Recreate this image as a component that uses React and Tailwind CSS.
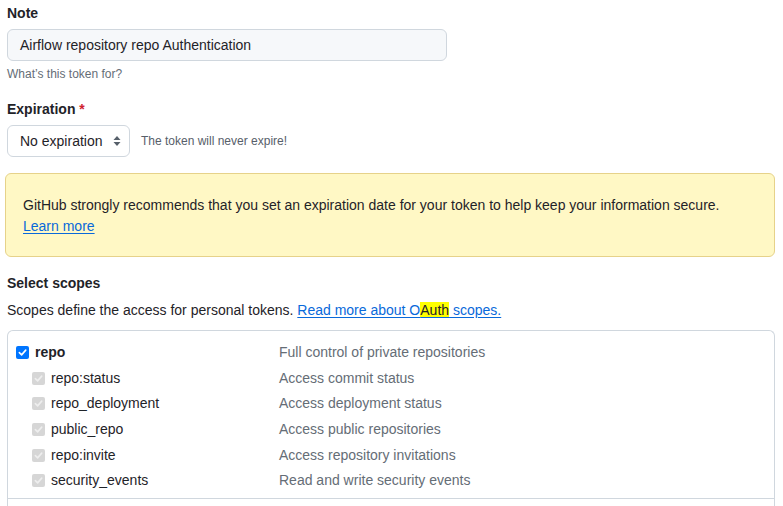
import React from 'react';

const scopes = [
  { name: 'repo:status', desc: 'Access commit status' },
  { name: 'repo_deployment', desc: 'Access deployment status' },
  { name: 'public_repo', desc: 'Access public repositories' },
  { name: 'repo:invite', desc: 'Access repository invitations' },
  { name: 'security_events', desc: 'Read and write security events' },
];

function CheckBox({ disabled }) {
  if (disabled) {
    return (
      <span className="flex h-[13px] w-[13px] items-center justify-center rounded-[2px] bg-[#d6d6d6]">
        <svg width="9" height="9" viewBox="0 0 10 10" fill="none">
          <path d="M1.5 5.2 4 7.6 8.6 2.4" stroke="#eeeeee" strokeWidth="1.8" strokeLinecap="round" strokeLinejoin="round" />
        </svg>
      </span>
    );
  }
  return (
    <span className="flex h-[13px] w-[13px] items-center justify-center rounded-[2px] bg-[#0075ff]">
      <svg width="9" height="9" viewBox="0 0 10 10" fill="none">
        <path d="M1.5 5.2 4 7.6 8.6 2.4" stroke="#ffffff" strokeWidth="1.8" strokeLinecap="round" strokeLinejoin="round" />
      </svg>
    </span>
  );
}

export default function App() {
  return (
    <div className="min-h-[506px] bg-white font-['Liberation_Sans',sans-serif] text-[14px] text-[#1f2328]">
      <div className="pl-[7px] pr-[9px] pt-[3px]">
        {/* Note */}
        <label className="block text-[14px] font-semibold leading-[20px]">Note</label>
        <div className="mt-[6px] flex h-[32px] w-[440px] items-center rounded-[6px] border border-[#d0d7de] bg-[#f6f8fa] px-[12px] leading-[20px]">
          Airflow repository repo Authentication
        </div>
        <p className="mt-[4px] text-[12px] leading-[18px] text-[#656d76]">What’s this token for?</p>

        {/* Expiration */}
        <label className="mt-[16px] block text-[14px] font-semibold leading-[20px]">
          Expiration <span className="text-[#cf222e]">*</span>
        </label>
        <div className="mt-[6px] flex items-center gap-[11px]">
          <div className="flex h-[32px] w-[123px] items-center justify-between rounded-[6px] border border-[#d0d7de] bg-white pl-[12px] pr-[8px]">
            <span>No expiration</span>
            <svg width="8" height="12" viewBox="0 0 8 12" fill="#57606a">
              <path d="M4 1 7.5 5H.5z" />
              <path d="M4 11 .5 7h7z" />
            </svg>
          </div>
          <span className="text-[12px] text-[#57606a]">The token will never expire!</span>
        </div>
      </div>

      {/* Warning */}
      <div className="ml-[5px] mr-[8px] mt-[16px] rounded-[6px] border border-[#e6d28a] bg-[#fff8c5] px-[17px] pb-[19px] pt-[21px] leading-[21px]">
        <p>GitHub strongly recommends that you set an expiration date for your token to help keep your information secure.</p>
        <a className="text-[#0969da] underline underline-offset-2">Learn more</a>
      </div>

      <div className="pl-[7px] pr-[8px]">
        <h3 className="mt-[16px] text-[14px] font-semibold leading-[20px]">Select scopes</h3>
        <p className="mt-[7px] leading-[21px]">
          Scopes define the access for personal tokens.{' '}
          <a className="text-[#0969da] underline underline-offset-2">
            Read more about O<span className="bg-[#ffff00] text-[#1f2328]">Auth</span> scopes.
          </a>
        </p>

        {/* Scopes list */}
        <div className="mt-[9px] rounded-t-[6px] border border-b-0 border-[#d0d7de]">
          <div className="px-[8px] pb-[5px] pt-[8px]">
            <div className="flex h-[26px] items-center">
              <div className="flex w-[263px] items-center gap-[6px]">
                <CheckBox />
                <span className="font-semibold">repo</span>
              </div>
              <span className="text-[#656d76]">Full control of private repositories</span>
            </div>
            {scopes.map((s) => (
              <div key={s.name} className="flex h-[25.6px] items-center pt-[1px]">
                <div className="flex w-[263px] items-center gap-[6px] pl-[16px]">
                  <CheckBox disabled />
                  <span>{s.name}</span>
                </div>
                <span className="text-[#656d76]">{s.desc}</span>
              </div>
            ))}
          </div>
          <div className="h-[8px] border-t border-[#d0d7de]" />
        </div>
      </div>
    </div>
  );
}
